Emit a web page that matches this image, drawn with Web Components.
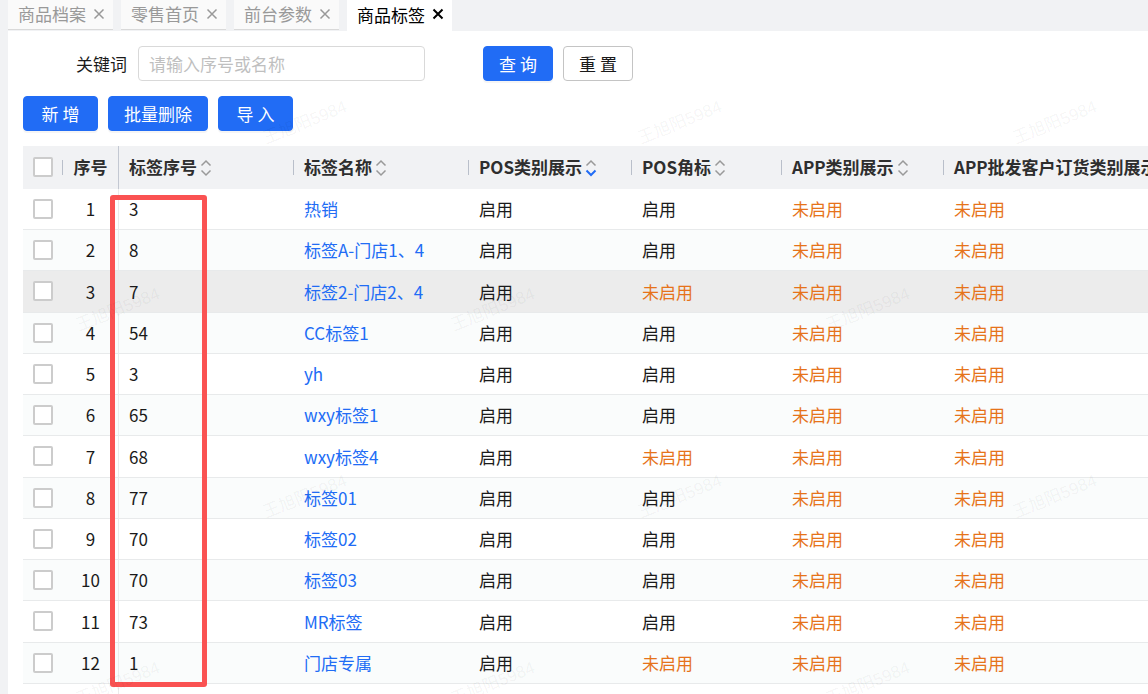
<!DOCTYPE html>
<html lang="zh-CN">
<head>
<meta charset="utf-8">
<meta name="viewport" content="width=device-width, initial-scale=1">
<title>商品标签</title>
<style>
  html, body { height: 100%; }
  body {
    margin: 0;
    overflow: hidden;
    background: #f1f2f4;
    color: #1a1a1a;
    font: 17px/25px "Noto Sans CJK SC", "Noto Sans", sans-serif;
  }
</style>
</head>
<body>
<tag-page></tag-page>

<template id="tag-page">
  <style>
    :host { display: flex; flex-direction: column; height: 100%; position: relative; overflow: hidden; padding-left: 8px; box-sizing: border-box; }
    nav { display: flex; gap: 8px; height: 31px; flex: none; }
    main { flex: 1; background: #fff; padding: 15px 0 0 15px; display: flex; flex-direction: column; gap: 15px; min-height: 0; }
    form { display: flex; align-items: center; margin: 0; padding-left: 53px; }
    .search { display: flex; gap: 10px; margin-left: 58px; }
    .actions { display: flex; gap: 10px; }
  </style>
  <nav>
    <page-tab>商品档案</page-tab>
    <page-tab>零售首页</page-tab>
    <page-tab>前台参数</page-tab>
    <page-tab active>商品标签</page-tab>
  </nav>
  <main>
    <form>
      <text-field label="关键词" placeholder="请输入序号或名称"></text-field>
      <div class="search">
        <ui-button>查 询</ui-button>
        <ui-button plain>重 置</ui-button>
      </div>
    </form>
    <div class="actions">
      <ui-button wide>新 增</ui-button>
      <ui-button wide>批量删除</ui-button>
      <ui-button wide>导 入</ui-button>
    </div>
    <tag-table></tag-table>
  </main>
  <water-mark text="王旭阳5984"></water-mark>
</template>

<template id="page-tab">
  <style>
    :host { display: flex; align-items: center; justify-content: space-between; box-sizing: border-box; width: 105px; height: 30px; padding: 0 8px 2px 10px; background: #fafafa; color: #999; border-bottom: 1px solid #d9d9d9; }
    :host([active]) { background: #fff; color: #000; height: 31px; border-color: #fff; }
    a { color: inherit; text-decoration: none; }
    button { display: flex; padding: 0; border: 0; background: none; color: inherit; }
    svg { display: block; width: 12px; height: 12px; fill: none; stroke: currentColor; stroke-width: 1.5; }
    :host([active]) svg { stroke-width: 2; }
  </style>
  <a href="#"><slot></slot></a>
  <button type="button" aria-label="关闭"><svg viewBox="0 0 12 12"><path d="M1.5 1.5l9 9M10.500 1.500l-9 9"/></svg></button>
</template>

<template id="text-field">
  <style>
    :host { display: flex; align-items: center; gap: 10px; }
    label { white-space: nowrap; min-width: 52px; }
    input { box-sizing: border-box; width: 287px; height: 35px; padding: 0 10px; border: 1px solid #d9d9d9; border-radius: 4px; background: #fff; color: inherit; font: inherit; outline: 0; }
    input::placeholder { color: #bfbfbf; opacity: 1; }
  </style>
  <label for="box"></label>
  <input id="box" type="text">
</template>

<template id="ui-button">
  <style>
    :host { display: block; }
    button { display: block; box-sizing: border-box; min-width: 70px; height: 35px; padding: 0 15px; border: 1px solid #216cf5; border-radius: 4px; background: #216cf5; color: #fff; font: inherit; white-space: nowrap; box-shadow: 0 2px 0 rgba(0, 0, 0, .04); }
    :host([wide]) button { min-width: 75px; }
    :host([plain]) button { background: #fff; border-color: #c4c4c4; color: #1a1a1a; box-shadow: none; }
  </style>
  <button type="button"><slot></slot></button>
</template>

<template id="sort-mark">
  <style>
    :host { display: inline-block; vertical-align: -3px; margin-left: 3px; }
    svg { display: block; width: 12px; height: 18px; fill: none; stroke: #999; stroke-width: 1.5; }
    :host([order="desc"]) .down { stroke: #216cf5; stroke-width: 2; }
  </style>
  <svg viewBox="0 0 12 18"><path d="M1.500 6.500L6 2l4.500 4.500"/><path class="down" d="M1.500 11.500L6 16l4.500-4.500"/></svg>
</template>

<template id="tag-table">
  <style>
    :host { display: block; position: relative; flex: 1; overflow: hidden; min-height: 0; }
    table { table-layout: fixed; width: 1196px; border-collapse: separate; border-spacing: 0; }
    th, td { box-sizing: border-box; padding: 0 0 1px 10px; text-align: left; white-space: nowrap; }
    th { height: 43px; padding-bottom: 2px; background: linear-gradient(#b9bfca, #b9bfca) right center / 1px 15px no-repeat #f1f2f4; font-weight: 600; color: #2e2e2e; }
    td { height: 41px; border-bottom: 1px solid #e8eaeb; }
    tbody tr:nth-child(4n+3) td { height: 42px; }
    tbody tr:nth-child(even) td { background: #fafcfc; }
    tbody tr.current td { background: #ececec; }
    .num { padding-left: 0; text-align: center; border-right: 1px solid #ebebeb; }
    th.num { background: #f1f2f4; border-right-color: #c3c8d2; }
    input { appearance: none; display: block; box-sizing: border-box; width: 20px; height: 20px; margin: 0; border: 2px solid #ccc; border-radius: 2px; background: #fff; }
    a { color: #216cf5; text-decoration: none; }
    .off { color: #e6731a; }
    .focus-box { position: absolute; left: 87px; top: 49px; width: 97px; height: 492px; box-sizing: border-box; border: 5px solid #fa5252; border-radius: 3px; pointer-events: none; }
  </style>
  <table>
    <colgroup>
      <col style="width:40px"><col style="width:56px"><col style="width:175px"><col style="width:175px">
      <col style="width:163px"><col style="width:150px"><col style="width:162px"><col>
    </colgroup>
    <thead><tr>
      <th><input type="checkbox" aria-label="全选"></th>
      <th class="num">序号</th>
      <th>标签序号<sort-mark></sort-mark></th>
      <th>标签名称<sort-mark></sort-mark></th>
      <th>POS类别展示<sort-mark order="desc"></sort-mark></th>
      <th>POS角标<sort-mark></sort-mark></th>
      <th>APP类别展示<sort-mark></sort-mark></th>
      <th>APP批发客户订货类别展示</th>
    </tr></thead>
    <tbody></tbody>
    <tfoot><tr><td></td><td class="num"></td><td colspan="6"></td></tr></tfoot>
  </table>
  <div class="focus-box"></div>
</template>

<template id="water-mark">
  <style>
    :host { position: absolute; inset: 0; overflow: hidden; pointer-events: none; font: 17px/20px "Liberation Sans", "Noto Sans CJK SC", sans-serif; color: rgba(0, 0, 0, .05); }
    span { position: absolute; white-space: nowrap; transform: translate(-50%, -50%) rotate(-22deg); }
  </style>
</template>

<script>
  class Base extends HTMLElement {
    constructor() {
      super();
      this.attachShadow({ mode: "open" })
        .append(document.getElementById(this.localName).content.cloneNode(true));
    }
  }

  customElements.define("page-tab", class extends Base {});
  customElements.define("ui-button", class extends Base {});
  customElements.define("sort-mark", class extends Base {});

  customElements.define("text-field", class extends Base {
    connectedCallback() {
      this.shadowRoot.querySelector("label").textContent = this.getAttribute("label");
      this.shadowRoot.querySelector("input").placeholder = this.getAttribute("placeholder");
    }
  });

  // Each row: tag number, tag name, whether the POS corner mark is on.
  const TAGS = [
    [3, "热销", true], [8, "标签A-门店1、4", true], [7, "标签2-门店2、4", false],
    [54, "CC标签1", true], [3, "yh", true], [65, "wxy标签1", true],
    [68, "wxy标签4", false], [77, "标签01", true], [70, "标签02", true],
    [70, "标签03", true], [73, "MR标签", true], [1, "门店专属", false]
  ];
  const CURRENT_ROW = 2;

  customElements.define("tag-table", class extends Base {
    connectedCallback() {
      const state = on => on ? "<td>启用</td>" : '<td class="off">未启用</td>';
      this.shadowRoot.querySelector("tbody").innerHTML = TAGS.map(([no, name, corner], i) => `
        <tr${i === CURRENT_ROW ? ' class="current"' : ""}>
          <td><input type="checkbox" aria-label="选择 ${name}"></td>
          <td class="num">${i + 1}</td><td>${no}</td><td><a href="#">${name}</a></td>
          ${state(true)}${state(corner)}${state(false)}${state(false)}
        </tr>`).join("");
    }
  });

  // Diagonal lattice of marks: 375px between marks, every other line shifted by half.
  customElements.define("water-mark", class extends Base {
    connectedCallback() {
      for (let line = 0; line < 4; line++) {
        for (let i = 0; i < 3; i++) {
          const mark = document.createElement("span");
          mark.textContent = this.getAttribute("text");
          mark.style.left = (line % 2 ? 118 : 305) + i * 375 + "px";
          mark.style.top = 123 + line * 187 + "px";
          this.shadowRoot.append(mark);
        }
      }
    }
  });

  customElements.define("tag-page", class extends Base {});
</script>
</body>
</html>
